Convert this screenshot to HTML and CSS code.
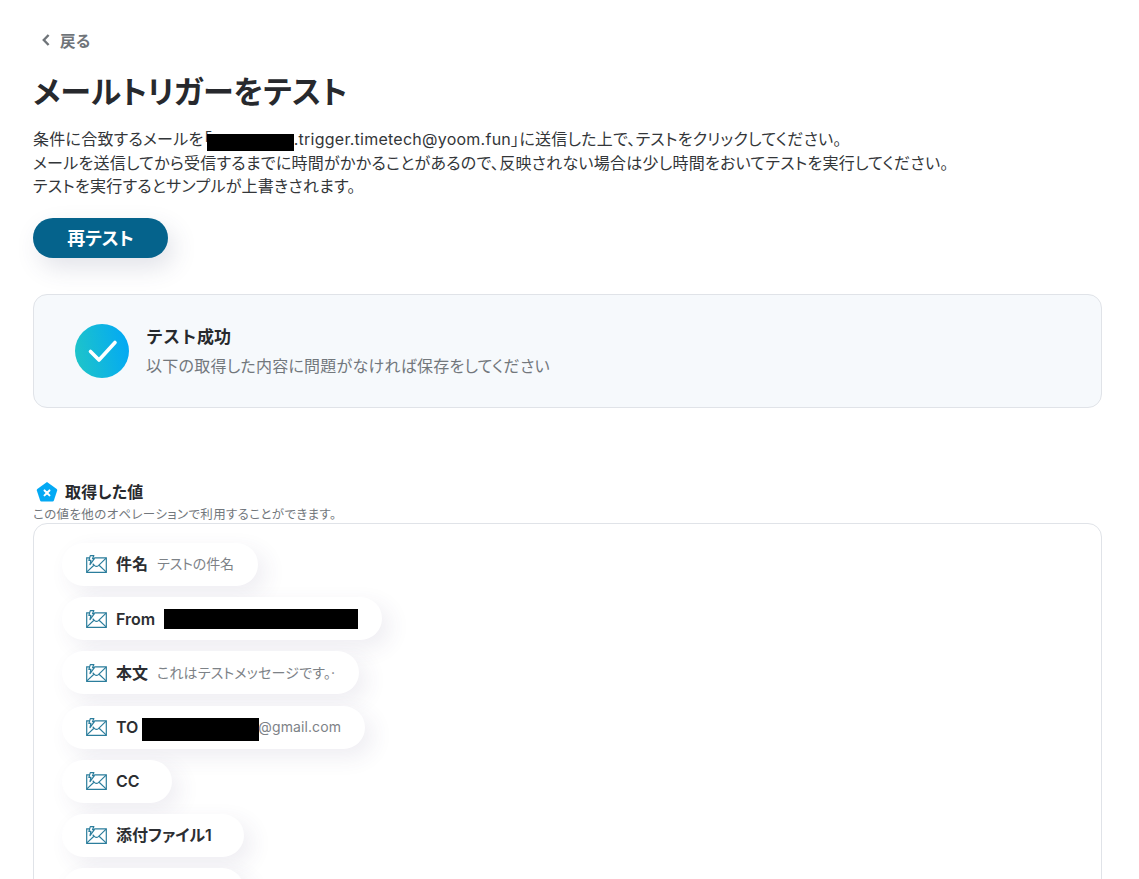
FILE: index.html
```html
<!DOCTYPE html>
<html lang="ja">
<head>
<meta charset="utf-8">
<title>メールトリガーをテスト</title>
<link rel="stylesheet" href="styles.css">
</head>
<body>
<svg class="defs" width="0" height="0" aria-hidden="true">
  <symbol id="mail" viewBox="0 0 21 18">
    <path d="M3.500 2.800H.7v14.500h19.600V2.800H8.200" fill="none" stroke="currentColor" stroke-width="1.200"/>
    <path d="M.9 16.900l7.300-6.900M20.100 16.900l-7.300-6.900M20.100 3.100l-7.700 7.500a2.800 2.800 0 0 1-3.800 0L6.700 8.800" fill="none" stroke="currentColor" stroke-width="1.200"/>
    <path d="M4.300.6h3.600L6.500 3.700h1.900L4 9.600l.9-4.200H2.900z" fill="#fff" stroke="currentColor" stroke-width="1.200" stroke-linejoin="round"/>
  </symbol>
</svg>
<main class="page">
  <a class="back">
    <svg class="back-icon" viewBox="0 0 10 14" width="10" height="14"><path d="M7.600 2 2.800 7l4.800 5" fill="none" stroke="#6f7479" stroke-width="2.400"/></svg>
    <span>戻る</span>
  </a>
  <h1 class="title">メールトリガーをテスト</h1>
  <div class="desc">
    <p>条件に合致するメールを「<span class="redact redact-addr"></span>.trigger.timetech@yoom.fun」に送信した上で、テストをクリックしてください。</p>
    <p>メールを送信してから受信するまでに時間がかかることがあるので、反映されない場合は少し時間をおいてテストを実行してください。</p>
    <p>テストを実行するとサンプルが上書きされます。</p>
  </div>
  <button class="retest">再テスト</button>
  <section class="success">
    <svg class="check" viewBox="0 0 54 54" width="54" height="54">
      <defs><linearGradient id="cg" x1="0" y1="0.6" x2="1" y2="0.4"><stop offset="0" stop-color="#1ec4c9"/><stop offset="1" stop-color="#03a9f4"/></linearGradient></defs>
      <circle cx="27" cy="27" r="27" fill="url(#cg)"/>
      <path d="M15.500 27.500l8.500 8.500L40 18.500" fill="none" stroke="#fff" stroke-width="3.600" stroke-linecap="round" stroke-linejoin="round"/>
    </svg>
    <div class="success-text">
      <div class="success-title">テスト成功</div>
      <div class="success-sub">以下の取得した内容に問題がなければ保存をしてください</div>
    </div>
  </section>
  <div class="values-head">
    <svg class="pent" viewBox="0 0 24 24" width="22" height="22">
      <path d="M12 1.200 22.600 8.800a1.500 1.500 0 0 1 .5 1.600l-3.600 11a1.500 1.500 0 0 1-1.400 1H5.900a1.500 1.500 0 0 1-1.400-1l-3.600-11a1.500 1.500 0 0 1 .5-1.600z" fill="#03a9f4"/>
      <path d="M9.300 10.300l5.400 5.400M14.700 10.300l-5.400 5.400" stroke="#fff" stroke-width="2.200" stroke-linecap="round"/>
    </svg>
    <span class="values-label">取得した値</span>
  </div>
  <div class="values-note">この値を他のオペレーションで利用することができます。</div>
  <section class="panel">
    <div class="pill"><svg class="mail"><use href="#mail"/></svg><b>件名</b><span class="val val-subject">テストの件名</span></div>
    <div class="pill"><svg class="mail"><use href="#mail"/></svg><b>From</b><span class="redact redact-from"></span></div>
    <div class="pill"><svg class="mail"><use href="#mail"/></svg><b>本文</b><span class="val">これはテストメッセージです。·</span></div>
    <div class="pill pill-to"><svg class="mail"><use href="#mail"/></svg><b>TO</b><span class="redact redact-to"></span><span class="val val-mail">@gmail.com</span></div>
    <div class="pill pill-cc"><svg class="mail"><use href="#mail"/></svg><b>CC</b></div>
    <div class="pill pill-file"><svg class="mail"><use href="#mail"/></svg><b>添付ファイル1</b></div>
    <div class="pill pill-file"></div>
  </section>
</main>
</body>
</html>
```
FILE: styles.css
```css
html, body { margin: 0; padding: 0; height: 879px; overflow: hidden; background: #fff; }
body { font-family: Inter, "Noto Sans CJK JP", sans-serif; color: #27292d; }
.defs { position: absolute; }
.page { padding: 29px 37px 0 33px; }
.back { display: flex; align-items: center; gap: 9px; height: 22px; padding-left: 8px; color: #6f7479; font-size: 15.500px; font-weight: 600; }
.title { margin: 19px 0 0; font-size: 31px; line-height: 44px; font-weight: 700; font-feature-settings: "palt"; letter-spacing: 0.100px; }
.desc { margin-top: 14.400px; font-size: 16px; line-height: 23.500px; color: #333639; font-feature-settings: "palt"; letter-spacing: 0.250px; }
.desc p { margin: 0; }
.redact { display: inline-block; background: #000; }
.redact-addr { width: 87px; height: 17px; vertical-align: -5.500px; margin-left: -5px; }
.retest { display: block; margin-top: 19.100px; width: 135px; height: 40px; padding: 0 0 2px; border: 0; border-radius: 20px; background: #05638c; color: #fff; font: 700 18px Inter, "Noto Sans CJK JP", sans-serif; font-feature-settings: "palt"; box-shadow: 6px 10px 24px rgba(60, 70, 110, .15); }
.success { display: flex; align-items: center; gap: 18px; margin-top: 36px; height: 112px; padding-left: 41px; background: #f6f9fc; border: 1px solid #e0e3e8; border-radius: 14px; }
.success-text { margin-left: -1px; }
.success-title { font-size: 17px; line-height: 24px; font-weight: 700; }
.success-sub { margin-top: 6px; font-size: 16px; line-height: 22px; color: #72777c; letter-spacing: .250px; font-feature-settings: "palt"; }
.values-head { display: flex; align-items: center; gap: 7px; margin-top: 72px; padding-left: 3px; height: 24px; font-size: 16px; font-weight: 600; font-feature-settings: "palt"; letter-spacing: .250px; }
.values-label { padding-bottom: 2px; }
.values-note { font-size: 12.500px; line-height: 16px; margin-top: 3px; color: #72777c; font-feature-settings: "palt"; letter-spacing: .360px; }
.panel { display: flex; flex-direction: column; align-items: flex-start; gap: 11.200px; height: 600px; padding: 19px 0 0 28px; border: 1px solid #e0e3e8; border-radius: 14px; }
.pill { display: flex; align-items: center; height: 43px; padding: 0 24px; border-radius: 22px; background: #fff; box-shadow: 8px 8px 22px rgba(70, 60, 110, .09); }
.mail { width: 21px; height: 18px; margin-right: 9px; color: #2b7d9c; }
.pill b { font-size: 16px; line-height: 20px; font-weight: 600; color: #2c2e32; font-feature-settings: "palt"; }
.val { margin-left: 9px; font-size: 14px; line-height: 20px; color: #7d8287; font-feature-settings: "palt"; letter-spacing: .200px; }
.val-subject { letter-spacing: -.100px; }
.redact-from { width: 194px; height: 20px; margin-left: 9px; }
.redact-to { width: 117px; height: 23px; margin: 4px 0 0 4px; }
.val-mail { margin-left: -1px; letter-spacing: .100px; }
.pill-cc { width: 110px; box-sizing: border-box; }
.pill-file { width: 182px; box-sizing: border-box; }
```
